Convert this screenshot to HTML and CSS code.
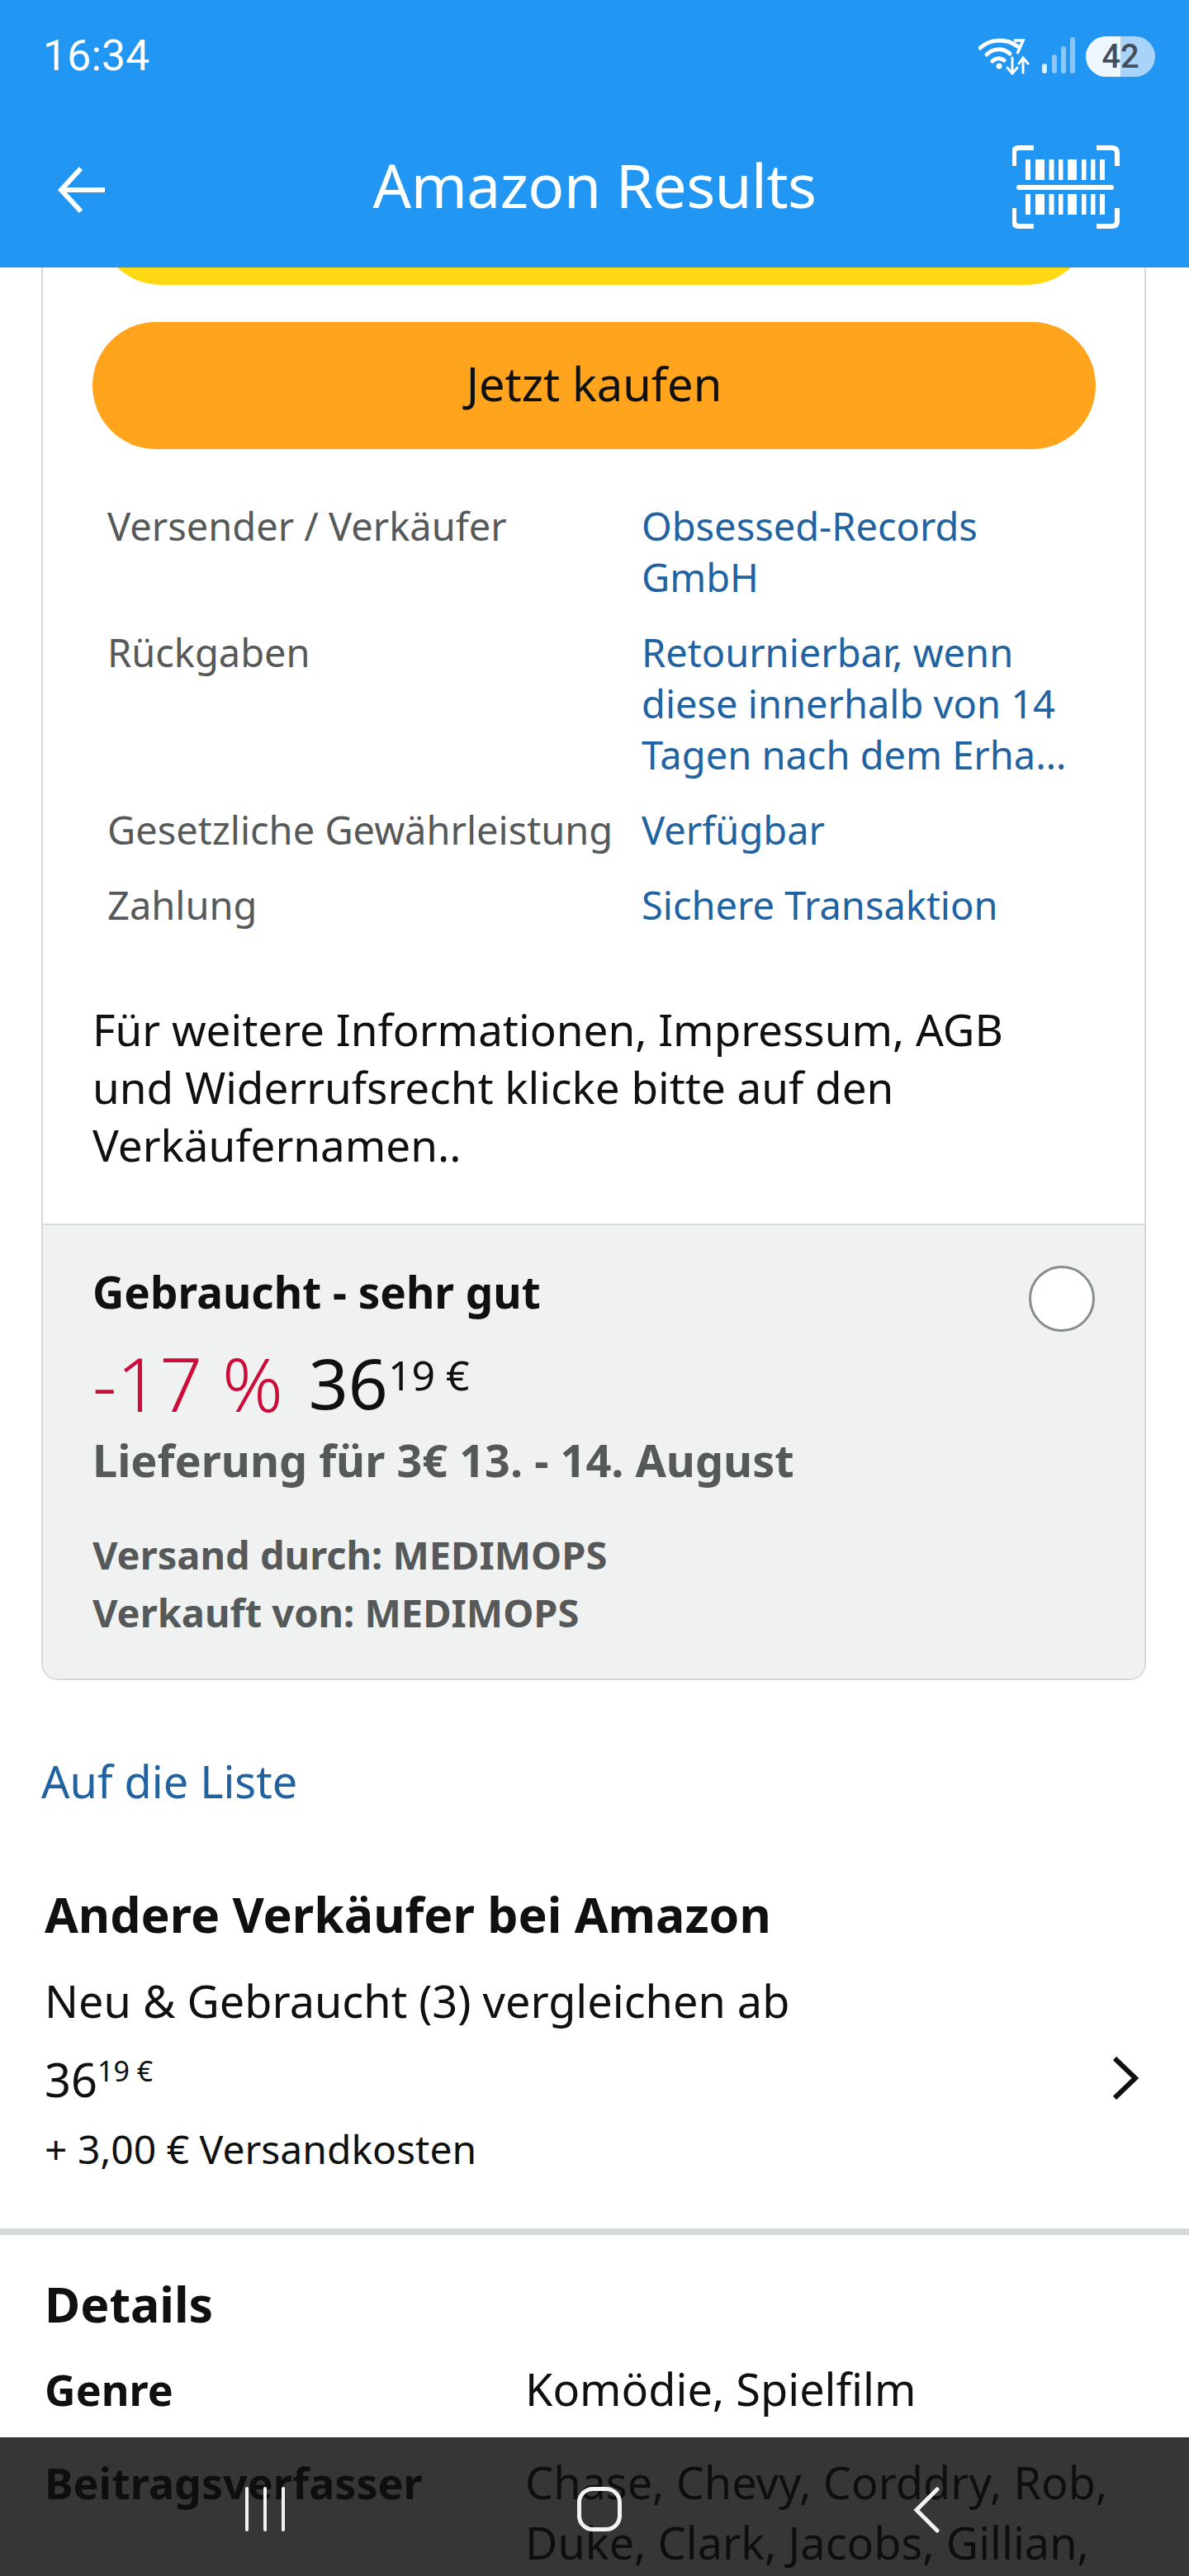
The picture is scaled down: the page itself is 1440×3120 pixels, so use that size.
FILE: index.html
```html
<!DOCTYPE html>
<html lang="de">
<head>
<meta charset="utf-8">
<title>Amazon Results</title>
<link rel="stylesheet" href="styles.css">
</head>
<body>
<div class="screen">
  <header class="appbar">
    <div class="status">
      <span class="clock">16:34</span>
      <div class="status-icons">
        <svg class="wifi" width="62" height="48" viewBox="0 0 62 48" fill="none" stroke="#fff" stroke-linecap="round">
          <path d="M2 14C14 3 33 2 47 12" stroke-width="5"/>
          <path d="M10 22C18 14 30 14 38 21" stroke-width="5"/>
          <path d="M17 30C21 26 27 26 31 29" stroke-width="5"/>
          <circle cx="25" cy="36" r="3.5" fill="#fff" stroke="none"/>
          <path d="M43 5H54L47 21" stroke-width="3.5" stroke-linecap="butt"/>
          <path d="M41 26V44M35 38L41 45L47 38" stroke-width="3"/>
          <path d="M54 44V27M49 33L54 26L60 33" stroke-width="3"/>
        </svg>
        <svg class="signal" width="42" height="46" viewBox="0 0 42 46" stroke-linecap="round" stroke-width="6">
          <path d="M5 35V41" stroke="#fff" stroke-opacity=".85"/>
          <path d="M17 24V41" stroke="#8cc6f8"/>
          <path d="M28 14V41" stroke="#8cc6f8"/>
          <path d="M39 3V41" stroke="#8cc6f8"/>
        </svg>
        <div class="battery"><span class="battery-num">42</span></div>
      </div>
    </div>
    <div class="toolbar">
      <svg class="back" width="60" height="58" viewBox="0 0 60 58" fill="none" stroke="#fff" stroke-width="6">
        <path d="M29 3L5 29L29 55M5 29H58"/>
      </svg>
      <h1 class="title">Amazon Results</h1>
      <svg class="scan" width="130" height="102" viewBox="0 0 130 102" fill="#fff">
        <path d="M2 25V9Q2 3 8 3H26M102 3H120Q127 3 127 9V25M2 76V92Q2 98 8 98H26M102 98H120Q127 98 127 92V76" fill="none" stroke="#fff" stroke-width="6"/>
        <rect x="5" y="48" width="118" height="6" rx="3"/>
        <path d="M16 17h6v25h-6zM28 17h11v25H28zM44.5 17h6v25h-6zM56 17h5.500v25H56zM67 17h11v25H67zM84 17h5.500v25H84zM95 17h5.500v25H95zM106 17h6v25h-6z"/>
        <path d="M16 59h6v25h-6zM28 59h11v25H28zM44.5 59h6v25h-6zM56 59h5.500v25H56zM67 59h11v25H67zM84 59h5.500v25H84zM95 59h5.500v25H95zM106 59h6v25h-6z"/>
      </svg>
    </div>
  </header>

  <main class="content">
    <section class="card">
      <div class="card-main">
        <div class="btn btn-yellow"></div>
        <div class="btn btn-orange"><span class="btn-label">Jetzt kaufen</span></div>
        <dl class="facts">
          <dt class="fact-label">Versender / Verkäufer</dt>
          <dd class="fact-value">Obsessed-Records GmbH</dd>
          <dt class="fact-label">Rückgaben</dt>
          <dd class="fact-value">Retournierbar, wenn diese innerhalb von 14 Tagen nach dem Erha…</dd>
          <dt class="fact-label">Gesetzliche Gewährleistung</dt>
          <dd class="fact-value">Verfügbar</dd>
          <dt class="fact-label">Zahlung</dt>
          <dd class="fact-value">Sichere Transaktion</dd>
        </dl>
        <p class="note">Für weitere Informationen, Impressum, AGB und Widerrufsrecht klicke bitte auf den Verkäufernamen..</p>
      </div>
      <div class="offer">
        <div class="offer-head">
          <h2 class="offer-title">Gebraucht - sehr gut</h2>
          <span class="radio"></span>
        </div>
        <div class="offer-price">
          <span class="discount">-17 %</span>
          <span class="price"><span class="price-main">36</span><sup class="price-frac">19 €</sup></span>
        </div>
        <div class="delivery">Lieferung für 3€ 13. - 14. August</div>
        <div class="seller">Versand durch: MEDIMOPS</div>
        <div class="seller">Verkauft von: MEDIMOPS</div>
      </div>
    </section>

    <a class="list-link">Auf die Liste</a>

    <section class="others">
      <div class="others-text">
        <h2 class="section-title">Andere Verkäufer bei Amazon</h2>
        <div class="compare">Neu &amp; Gebraucht (3) vergleichen ab</div>
        <div class="small-price"><span class="small-main">36</span><sup class="small-frac">19 €</sup></div>
        <div class="shipping">+ 3,00 € Versandkosten</div>
      </div>
      <svg class="chevron" width="34" height="52" viewBox="0 0 34 52" fill="none" stroke="#0f1111" stroke-width="6">
        <path d="M4 2L29 26L4 50"/>
      </svg>
    </section>

    <hr class="rule">

    <section class="details">
      <h2 class="section-title details-title">Details</h2>
      <div class="detail-grid">
        <div class="detail-key">Genre</div>
        <div class="detail-val">Komödie, Spielfilm</div>
        <div class="detail-key">Beitragsverfasser</div>
        <div class="detail-val">Chase, Chevy, Corddry, Rob, Duke, Clark, Jacobs, Gillian,</div>
      </div>
    </section>
  </main>

  <nav class="navbar">
    <svg width="50" height="54" viewBox="0 0 50 54" stroke="#f2f2f2" stroke-width="4" stroke-linecap="round">
      <path d="M3 2V52M25 2V52M47 2V52"/>
    </svg>
    <span class="nav-home"></span>
    <svg width="32" height="56" viewBox="0 0 32 56" fill="none" stroke="#f2f2f2" stroke-width="5" stroke-linecap="round">
      <path d="M29 3L4 28L29 53"/>
    </svg>
  </nav>
</div>
</body>
</html>
```

FILE: styles.css
```css
* { box-sizing: border-box; }
html, body { margin: 0; padding: 0; }
body { background: #fff; font-family: "Noto Sans", "Open Sans", sans-serif; color: #0f1111; }
.screen { position: relative; width: 1440px; height: 3120px; overflow: hidden; }

.appbar { position: relative; z-index: 2; height: 324px; background: #2196f3; color: #fff; }
.status { display: flex; justify-content: space-between; align-items: center; height: 136px; padding: 0 41px 0 52px; }
.clock { font-family: Roboto, sans-serif; font-size: 52px; line-height: 60px; }
.status-icons { display: flex; align-items: center; gap: 13px; }
.battery { position: relative; width: 84px; height: 49px; border-radius: 25px; background: linear-gradient(90deg, #eff7fe 0, #eff7fe 50%, #a8d3fb 50%, #a8d3fb 100%); display: flex; align-items: center; justify-content: center; }
.battery-num { font-family: Roboto, sans-serif; font-size: 40px; font-weight: 500; color: #454e5c; }
.toolbar { display: flex; align-items: center; justify-content: space-between; height: 188px; padding: 0 84px 0 69px; position: relative; }
.title { position: absolute; left: 0; right: 0; top: 52px; margin: 0; text-align: center; font-size: 73px; line-height: 72px; font-weight: 400; letter-spacing: -.6px; }
.scan { margin-top: -6px; }

.content { margin-top: -135px; padding: 0; }
.card { margin: 0 52px 0 50px; border: 2px solid #d5d9d9; border-radius: 20px; overflow: hidden; }
.card-main { padding: 0 59px 60px 60px; }
.btn { height: 154px; border-radius: 77px; display: flex; align-items: center; justify-content: center; font-size: 56px; }
.btn-label { margin-bottom: 6px; }
.btn-yellow { background: #ffd814; margin: 0 6px 0; }
.btn-orange { background: #ffa41c; margin-top: 45px; }
.facts { display: grid; grid-template-columns: 647px 1fr; row-gap: 29px; margin: 62px 0 0; padding-left: 18px; font-size: 47px; line-height: 62px; }
.fact-label { color: #565959; white-space: nowrap; }
.fact-value { margin: 0; color: #2162a1; width: 530px; }
.note { margin: 85px 0 0; padding-right: 30px; font-size: 53px; line-height: 70px; }

.offer { background: #f0f2f2; border-top: 2px solid #d5d9d9; padding: 46px 60px 45px; }
.offer-head { display: flex; justify-content: space-between; align-items: flex-start; }
.offer-title { margin: 0; font-size: 53px; line-height: 70px; font-weight: 700; }
.radio { width: 80px; height: 80px; border: 3px solid #888c8c; border-radius: 50%; background: #fff; margin-top: 3px; }
.offer-price { display: flex; align-items: flex-start; gap: 31px; margin-top: 7px; height: 110px; }
.discount { font-size: 91px; line-height: 110px; font-weight: 300; color: #cc0c39; }
.price { display: flex; align-items: flex-start; }
.price-main { font-size: 84px; line-height: 110px; }
.price-frac { font-size: 50px; line-height: 90px; vertical-align: baseline; }
.delivery { margin-top: 3px; font-size: 54px; line-height: 70px; font-weight: 700; color: #565959; }
.seller { font-size: 47px; line-height: 70px; font-weight: 700; color: #565959; }
.delivery + .seller { margin-top: 45px; }

.list-link { display: block; margin: 87px 0 0 50px; font-size: 54px; line-height: 70px; color: #2162a1; }

.others { display: flex; justify-content: space-between; align-items: center; margin-top: 86px; padding: 0 60px 0 54px; }
.section-title { margin: 0; font-size: 59px; line-height: 80px; font-weight: 700; }
.compare { margin-top: 30px; font-size: 54px; line-height: 70px; }
.small-price { display: flex; align-items: flex-start; margin-top: 25px; height: 70px; }
.small-main { font-size: 56px; line-height: 70px; }
.small-frac { font-size: 34px; line-height: 50px; vertical-align: baseline; }
.shipping { margin-top: 15px; font-size: 48px; line-height: 70px; }
.chevron { margin-top: 118px; }

.rule { height: 8px; margin: 61px 0 0; border: 0; background: #d5d9d9; }

.details { padding: 0 54px; margin-top: 43px; }
.detail-grid { display: grid; grid-template-columns: 582px 1fr; margin-top: 27px; font-size: 54px; line-height: 73px; row-gap: 40px; }
.detail-key { font-size: 52px; font-weight: 700; }
.detail-val { width: 760px; }

.navbar { position: absolute; z-index: 3; left: 0; right: 0; bottom: 0; height: 168px; background: rgba(14, 14, 14, .835); display: flex; align-items: flex-start; padding: 60px 0 0 296px; gap: 353px; }
.nav-home { width: 54px; height: 54px; border: 5px solid #f2f2f2; border-radius: 19px; }
```
